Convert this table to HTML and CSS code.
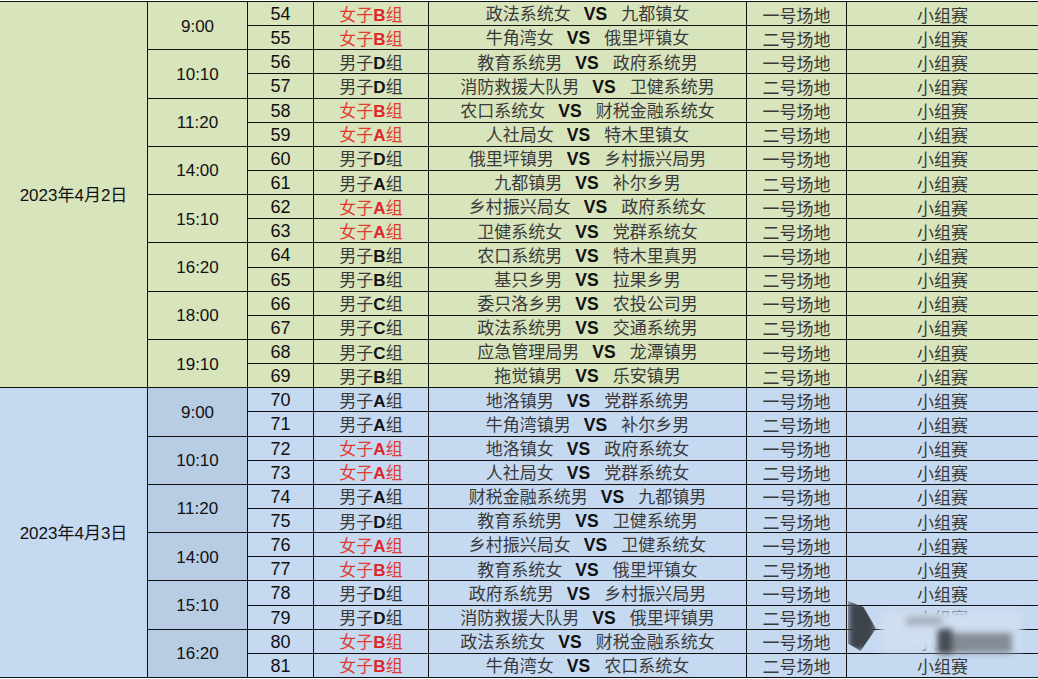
FILE: index.html
```html
<!DOCTYPE html>
<html lang="zh-CN">
<head>
<meta charset="utf-8">
<title>赛程表</title>
<link rel="stylesheet" href="styles.css">
</head>
<body>
<div class="sheet">
  <div class="grid">
    <div class="c d green" style="grid-row: span 16">2023年4月2日</div>

    <div class="c t green" style="grid-row: span 2">9:00</div>
    <div class="c n green">54</div><div class="c g green red"><span>女子<b>B</b>组</span></div><div class="c m green"><span>政法系统女<b>VS</b>九都镇女</span></div><div class="c v green">一号场地</div><div class="c k green">小组赛</div>
    <div class="c n green">55</div><div class="c g green red"><span>女子<b>B</b>组</span></div><div class="c m green"><span>牛角湾女<b>VS</b>俄里坪镇女</span></div><div class="c v green">二号场地</div><div class="c k green">小组赛</div>

    <div class="c t green" style="grid-row: span 2">10:10</div>
    <div class="c n green">56</div><div class="c g green"><span>男子<b>D</b>组</span></div><div class="c m green"><span>教育系统男<b>VS</b>政府系统男</span></div><div class="c v green">一号场地</div><div class="c k green">小组赛</div>
    <div class="c n green">57</div><div class="c g green"><span>男子<b>D</b>组</span></div><div class="c m green"><span>消防救援大队男<b>VS</b>卫健系统男</span></div><div class="c v green">二号场地</div><div class="c k green">小组赛</div>

    <div class="c t green" style="grid-row: span 2">11:20</div>
    <div class="c n green">58</div><div class="c g green red"><span>女子<b>B</b>组</span></div><div class="c m green"><span>农口系统女<b>VS</b>财税金融系统女</span></div><div class="c v green">一号场地</div><div class="c k green">小组赛</div>
    <div class="c n green">59</div><div class="c g green red"><span>女子<b>A</b>组</span></div><div class="c m green"><span>人社局女<b>VS</b>特木里镇女</span></div><div class="c v green">二号场地</div><div class="c k green">小组赛</div>

    <div class="c t green" style="grid-row: span 2">14:00</div>
    <div class="c n green">60</div><div class="c g green"><span>男子<b>D</b>组</span></div><div class="c m green"><span>俄里坪镇男<b>VS</b>乡村振兴局男</span></div><div class="c v green">一号场地</div><div class="c k green">小组赛</div>
    <div class="c n green">61</div><div class="c g green"><span>男子<b>A</b>组</span></div><div class="c m green"><span>九都镇男<b>VS</b>补尔乡男</span></div><div class="c v green">二号场地</div><div class="c k green">小组赛</div>

    <div class="c t green" style="grid-row: span 2">15:10</div>
    <div class="c n green">62</div><div class="c g green red"><span>女子<b>A</b>组</span></div><div class="c m green"><span>乡村振兴局女<b>VS</b>政府系统女</span></div><div class="c v green">一号场地</div><div class="c k green">小组赛</div>
    <div class="c n green">63</div><div class="c g green red"><span>女子<b>A</b>组</span></div><div class="c m green"><span>卫健系统女<b>VS</b>党群系统女</span></div><div class="c v green">二号场地</div><div class="c k green">小组赛</div>

    <div class="c t green" style="grid-row: span 2">16:20</div>
    <div class="c n green">64</div><div class="c g green"><span>男子<b>B</b>组</span></div><div class="c m green"><span>农口系统男<b>VS</b>特木里真男</span></div><div class="c v green">一号场地</div><div class="c k green">小组赛</div>
    <div class="c n green">65</div><div class="c g green"><span>男子<b>B</b>组</span></div><div class="c m green"><span>基只乡男<b>VS</b>拉果乡男</span></div><div class="c v green">二号场地</div><div class="c k green">小组赛</div>

    <div class="c t green" style="grid-row: span 2">18:00</div>
    <div class="c n green">66</div><div class="c g green"><span>男子<b>C</b>组</span></div><div class="c m green"><span>委只洛乡男<b>VS</b>农投公司男</span></div><div class="c v green">一号场地</div><div class="c k green">小组赛</div>
    <div class="c n green">67</div><div class="c g green"><span>男子<b>C</b>组</span></div><div class="c m green"><span>政法系统男<b>VS</b>交通系统男</span></div><div class="c v green">二号场地</div><div class="c k green">小组赛</div>

    <div class="c t green" style="grid-row: span 2">19:10</div>
    <div class="c n green">68</div><div class="c g green"><span>男子<b>C</b>组</span></div><div class="c m green"><span>应急管理局男<b>VS</b>龙潭镇男</span></div><div class="c v green">一号场地</div><div class="c k green">小组赛</div>
    <div class="c n green">69</div><div class="c g green"><span>男子<b>B</b>组</span></div><div class="c m green"><span>拖觉镇男<b>VS</b>乐安镇男</span></div><div class="c v green">二号场地</div><div class="c k green">小组赛</div>

    <div class="c d blue" style="grid-row: span 12">2023年4月3日</div>

    <div class="c t tblue" style="grid-row: span 2">9:00</div>
    <div class="c n blue">70</div><div class="c g blue"><span>男子<b>A</b>组</span></div><div class="c m blue"><span>地洛镇男<b>VS</b>党群系统男</span></div><div class="c v blue">一号场地</div><div class="c k blue">小组赛</div>
    <div class="c n blue">71</div><div class="c g blue"><span>男子<b>A</b>组</span></div><div class="c m blue"><span>牛角湾镇男<b>VS</b>补尔乡男</span></div><div class="c v blue">二号场地</div><div class="c k blue">小组赛</div>

    <div class="c t tblue" style="grid-row: span 2">10:10</div>
    <div class="c n blue">72</div><div class="c g blue red"><span>女子<b>A</b>组</span></div><div class="c m blue"><span>地洛镇女<b>VS</b>政府系统女</span></div><div class="c v blue">一号场地</div><div class="c k blue">小组赛</div>
    <div class="c n blue">73</div><div class="c g blue red"><span>女子<b>A</b>组</span></div><div class="c m blue"><span>人社局女<b>VS</b>党群系统女</span></div><div class="c v blue">二号场地</div><div class="c k blue">小组赛</div>

    <div class="c t tblue" style="grid-row: span 2">11:20</div>
    <div class="c n blue">74</div><div class="c g blue"><span>男子<b>A</b>组</span></div><div class="c m blue"><span>财税金融系统男<b>VS</b>九都镇男</span></div><div class="c v blue">一号场地</div><div class="c k blue">小组赛</div>
    <div class="c n blue">75</div><div class="c g blue"><span>男子<b>D</b>组</span></div><div class="c m blue"><span>教育系统男<b>VS</b>卫健系统男</span></div><div class="c v blue">二号场地</div><div class="c k blue">小组赛</div>

    <div class="c t tblue" style="grid-row: span 2">14:00</div>
    <div class="c n blue">76</div><div class="c g blue red"><span>女子<b>A</b>组</span></div><div class="c m blue"><span>乡村振兴局女<b>VS</b>卫健系统女</span></div><div class="c v blue">一号场地</div><div class="c k blue">小组赛</div>
    <div class="c n blue">77</div><div class="c g blue red"><span>女子<b>B</b>组</span></div><div class="c m blue"><span>教育系统女<b>VS</b>俄里坪镇女</span></div><div class="c v blue">二号场地</div><div class="c k blue">小组赛</div>

    <div class="c t tblue" style="grid-row: span 2">15:10</div>
    <div class="c n blue">78</div><div class="c g blue"><span>男子<b>D</b>组</span></div><div class="c m blue"><span>政府系统男<b>VS</b>乡村振兴局男</span></div><div class="c v blue">一号场地</div><div class="c k blue">小组赛</div>
    <div class="c n blue">79</div><div class="c g blue"><span>男子<b>D</b>组</span></div><div class="c m blue"><span>消防救援大队男<b>VS</b>俄里坪镇男</span></div><div class="c v blue">二号场地</div><div class="c k blue">小组赛</div>

    <div class="c t tblue" style="grid-row: span 2">16:20</div>
    <div class="c n blue">80</div><div class="c g blue red"><span>女子<b>B</b>组</span></div><div class="c m blue"><span>政法系统女<b>VS</b>财税金融系统女</span></div><div class="c v blue">一号场地</div><div class="c k blue">小组赛</div>
    <div class="c n blue">81</div><div class="c g blue red"><span>女子<b>B</b>组</span></div><div class="c m blue"><span>牛角湾女<b>VS</b>农口系统女</span></div><div class="c v blue">二号场地</div><div class="c k blue">小组赛</div>
  </div>

  <div class="wm" aria-hidden="true">
    <div class="wm-haze"></div>
    <div class="wm-blob1"></div>
    <div class="wm-blob2"></div>
    <div class="wm-blob3"></div>
    <div class="wm-blob4"></div>
  </div>
</div>
</body>
</html>
```

FILE: styles.css
```css
html, body {
  margin: 0;
  padding: 0;
  background: #ffffff;
}

.sheet {
  position: relative;
  width: 1038px;
  margin-top: 1px;
  overflow: hidden;
}

.grid {
  display: grid;
  grid-template-columns: 148px 100px 66px 115px 318px 100px 191px;
  grid-template-rows: repeat(28, 1fr);
  height: 676px;
  border-top: 1px solid #111;
}

.c {
  box-sizing: border-box;
  display: flex;
  align-items: center;
  justify-content: center;
  border-right: 1px solid #111;
  border-bottom: 1px solid #111;
  white-space: nowrap;
  font-family: "Noto Sans CJK SC", "Liberation Sans", sans-serif;
  font-size: 17px;
  color: #3a3a3a;
  line-height: 1;
  padding-top: 1px;
}

.green { background: #d8e4bc; }
.blue { background: #c5d9f1; }
.tblue { background: #b8cce4; }

.d {
  grid-column: 1;
  font-family: "Liberation Sans", "Noto Sans CJK SC", sans-serif;
  font-size: 17px;
  color: #111;
}

.t {
  grid-column: 2;
  font-family: "Liberation Sans", sans-serif;
  font-size: 17px;
  color: #111;
}

.n {
  grid-column: 3;
  font-family: "Liberation Sans", sans-serif;
  font-size: 18px;
  color: #111;
}

.g { grid-column: 4; }
.m { grid-column: 5; }
.v { grid-column: 6; }
.k { grid-column: 7; border-right: none; }

.g b {
  font-family: "Liberation Sans", sans-serif;
  font-weight: bold;
  font-size: 17px;
  color: #111;
}

.red { color: #e33a30; }
.red b { color: #e0262a; }

.m b {
  font-family: "Liberation Sans", sans-serif;
  font-weight: bold;
  font-size: 17.5px;
  color: #111;
  margin: 0 14px 0 13px;
}

.wm {
  position: absolute;
  left: 846px;
  top: 592px;
  width: 190px;
  height: 70px;
  pointer-events: none;
}

.wm-haze {
  position: absolute;
  left: 34px;
  top: 18px;
  width: 142px;
  height: 40px;
  background: #cfdef0;
  filter: blur(3px);
}

.wm-blob1 {
  position: absolute;
  left: 2px;
  top: 8px;
  width: 28px;
  height: 50px;
  background: #3f444c;
  clip-path: polygon(0 0, 55% 12%, 100% 55%, 45% 100%, 0 85%);
  filter: blur(3px);
}

.wm-blob2 {
  position: absolute;
  left: 94px;
  top: 40px;
  width: 72px;
  height: 20px;
  background: #848c96;
  filter: blur(3px);
}

.wm-blob3 {
  position: absolute;
  left: 92px;
  top: 36px;
  width: 14px;
  height: 24px;
  background: #474c54;
  filter: blur(3px);
}

.wm-blob4 {
  position: absolute;
  left: 60px;
  top: 24px;
  width: 36px;
  height: 8px;
  background: #a3acb7;
  filter: blur(3px);
}
```
